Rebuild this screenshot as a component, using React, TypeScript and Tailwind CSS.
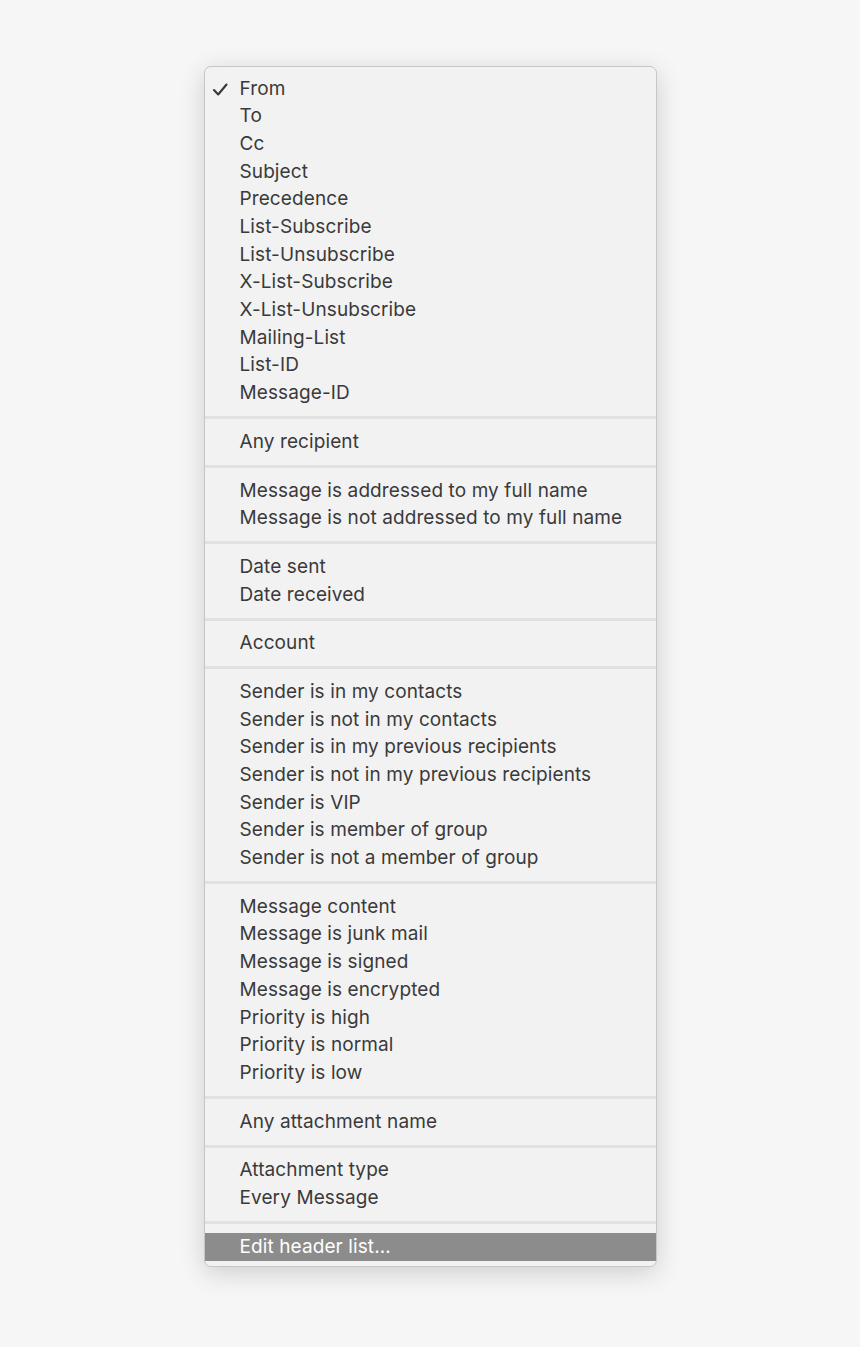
import React from "react";

const groups: string[][] = [
  ["From","To","Cc","Subject","Precedence","List-Subscribe","List-Unsubscribe","X-List-Subscribe","X-List-Unsubscribe","Mailing-List","List-ID","Message-ID"],
  ["Any recipient"],
  ["Message is addressed to my full name","Message is not addressed to my full name"],
  ["Date sent","Date received"],
  ["Account"],
  ["Sender is in my contacts","Sender is not in my contacts","Sender is in my previous recipients","Sender is not in my previous recipients","Sender is VIP","Sender is member of group","Sender is not a member of group"],
  ["Message content","Message is junk mail","Message is signed","Message is encrypted","Priority is high","Priority is normal","Priority is low"],
  ["Any attachment name"],
  ["Attachment type","Every Message"],
];

function Row({ label, checked }: { label: string; checked?: boolean }) {
  return (
    <div className="relative flex h-[27.7px] items-center pl-[35px] text-[19px] tracking-[0.1px] text-[#3a3a3a]">
      {checked && (
        <svg className="absolute left-[7px] top-[7px]" width="17" height="15" viewBox="0 0 17 15">
          <path d="M2 8 L6.2 12.5 L14.5 2.5" fill="none" stroke="#383838" strokeWidth="2.1" strokeLinecap="round" strokeLinejoin="round" />
        </svg>
      )}
      <span>{label}</span>
    </div>
  );
}

function Sep() {
  return (
    <div className="flex h-[21px] items-center">
      <div className="h-[3px] w-full bg-[#e1e1e1]" />
    </div>
  );
}

export default function App() {
  return (
    <div className="flex min-h-[1347px] w-full justify-center bg-[#f6f6f6] pt-[66px]" style={{ fontFamily: "Inter, 'Noto Sans', sans-serif" }}>
      <div className="h-fit w-[453px] overflow-hidden rounded-[7px] border border-[#c6c6c6] bg-[#f2f2f2] pt-[8px] pb-[5px] shadow-[0_6px_26px_rgba(0,0,0,0.16)]">
        {groups.map((g, gi) => (
          <React.Fragment key={gi}>
            {g.map((l, i) => (
              <Row key={l} label={l} checked={gi === 0 && i === 0} />
            ))}
            <Sep />
          </React.Fragment>
        ))}
        <div className="flex h-[28px] items-center bg-[#8c8c8c] pl-[35px] text-[19px] tracking-[0.1px] text-white">
          Edit header list…
        </div>
      </div>
    </div>
  );
}
